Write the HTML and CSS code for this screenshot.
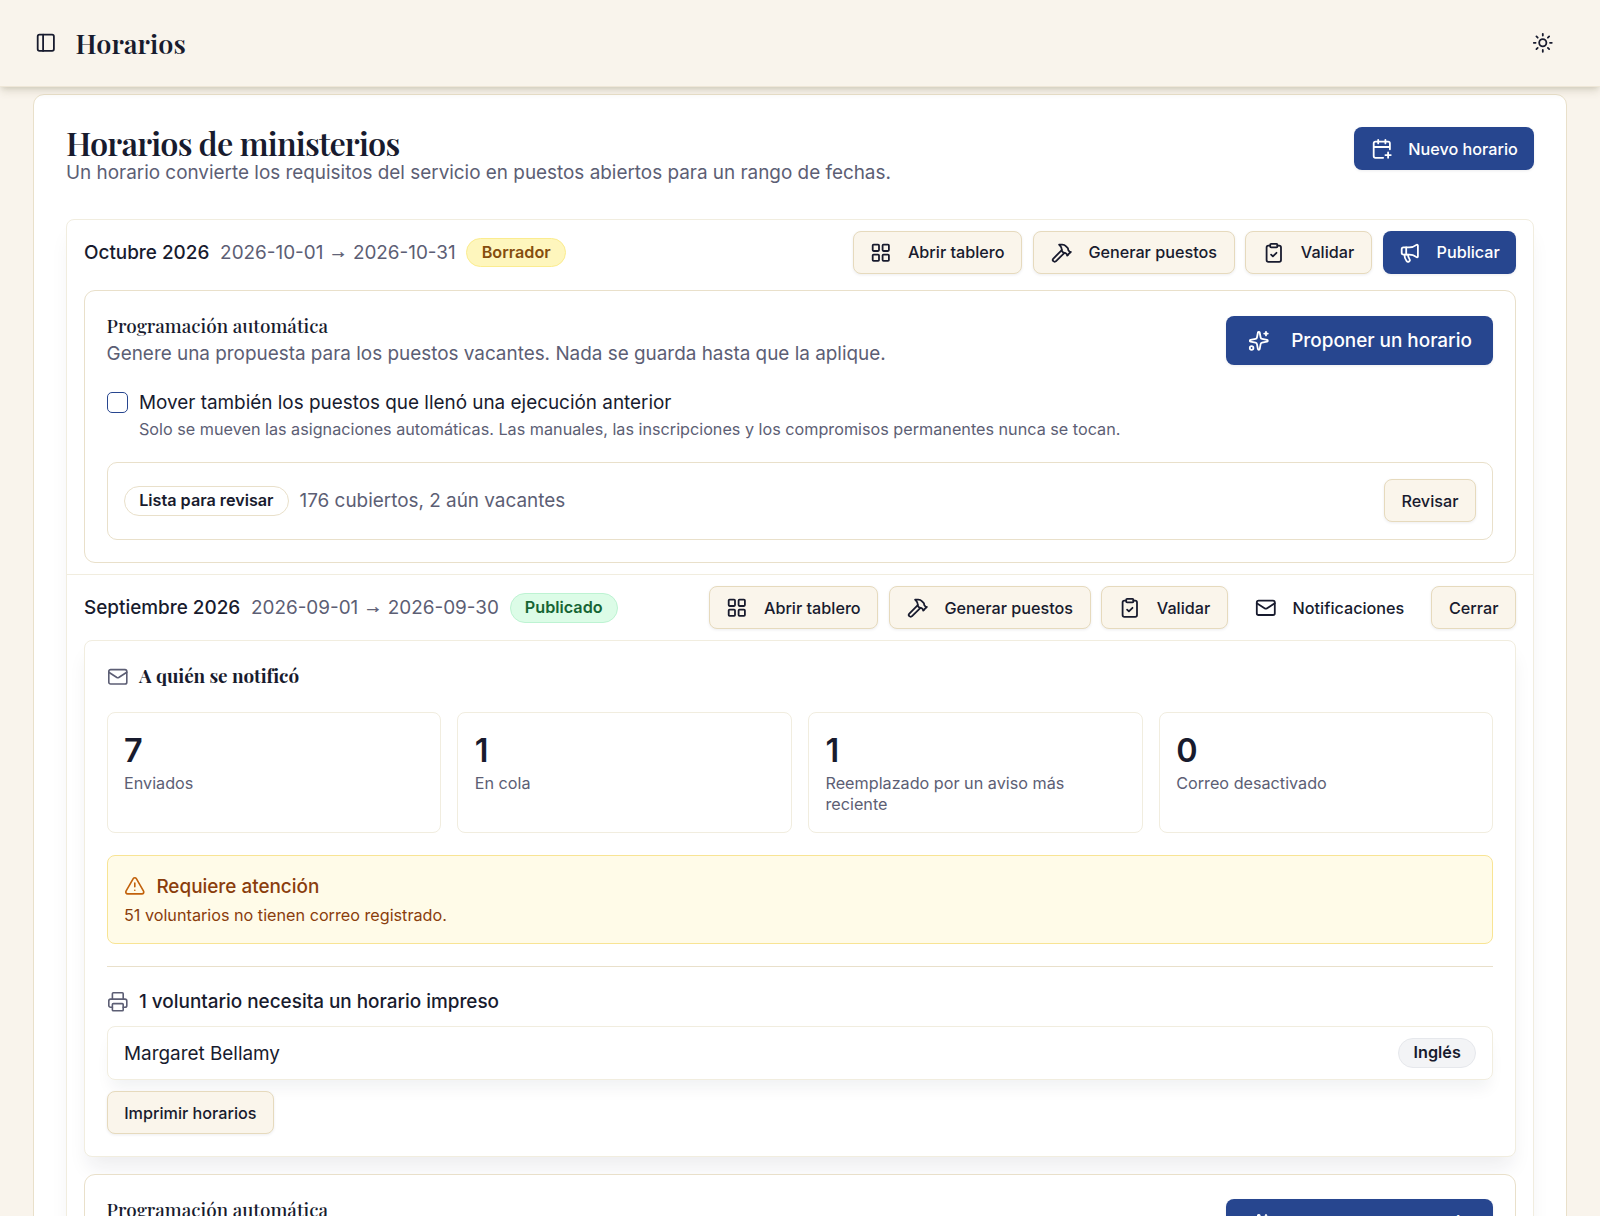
FILE: index.html
```html
<!DOCTYPE html>
<html lang="es">
<head>
    <meta charset="UTF-8">
    <meta name="viewport" content="width=device-width, initial-scale=1.0">
    <title>Horarios</title>
    <link rel="stylesheet" href="styles.css">
</head>
<body>
    <!-- Icon set -->
    <svg class="icon-defs" aria-hidden="true">
        <symbol id="i-panel" viewBox="0 0 24 24"><rect x="3" y="3" width="18" height="18" rx="2"/><path d="M9 3v18"/></symbol>
        <symbol id="i-sun" viewBox="0 0 24 24"><circle cx="12" cy="12" r="4"/><path d="M12 2v2M12 20v2M4.93 4.93l1.41 1.41M17.66 17.66l1.41 1.41M2 12h2M20 12h2M6.34 17.66l-1.41 1.41M19.07 4.93l-1.41 1.41"/></symbol>
        <symbol id="i-calendar" viewBox="0 0 24 24"><path d="M16 19h6M16 2v4M19 16v6M21 12.598V6a2 2 0 0 0-2-2H5a2 2 0 0 0-2 2v14a2 2 0 0 0 2 2h8.5M3 10h18M8 2v4"/></symbol>
        <symbol id="i-grid" viewBox="0 0 24 24"><rect x="3" y="3" width="7" height="7" rx="1"/><rect x="14" y="3" width="7" height="7" rx="1"/><rect x="14" y="14" width="7" height="7" rx="1"/><rect x="3" y="14" width="7" height="7" rx="1"/></symbol>
        <symbol id="i-hammer" viewBox="0 0 24 24"><path d="m15 12-9.373 9.373a1 1 0 0 1-3.001-3L12 9"/><path d="m18 15 4-4"/><path d="m21.5 11.5-1.914-1.914A2 2 0 0 1 19 8.172v-.344a2 2 0 0 0-.586-1.414l-1.657-1.657A6 6 0 0 0 12.516 3H9l1.243 1.243A6 6 0 0 1 12 8.485V10l2 2h1.172a2 2 0 0 1 1.414.586L18.5 14.5"/></symbol>
        <symbol id="i-clipboard" viewBox="0 0 24 24"><rect x="8" y="2" width="8" height="4" rx="1"/><path d="M16 4h2a2 2 0 0 1 2 2v14a2 2 0 0 1-2 2H6a2 2 0 0 1-2-2V6a2 2 0 0 1 2-2h2"/><path d="m9 14 2 2 4-4"/></symbol>
        <symbol id="i-megaphone" viewBox="0 0 24 24"><path d="M11 6a13 13 0 0 0 8.4-2.8A1 1 0 0 1 21 4v12a1 1 0 0 1-1.6.8A13 13 0 0 0 11 14H5a2 2 0 0 1-2-2V8a2 2 0 0 1 2-2z"/><path d="M6 14a12 12 0 0 0 2.4 7.2 2 2 0 0 0 3.2-2.4A8 8 0 0 1 10 14"/><path d="M8 6v8"/></symbol>
        <symbol id="i-sparkles" viewBox="0 0 24 24"><path d="M11.017 2.814a1 1 0 0 1 1.966 0l1.051 5.558a2 2 0 0 0 1.594 1.594l5.558 1.051a1 1 0 0 1 0 1.966l-5.558 1.051a2 2 0 0 0-1.594 1.594l-1.051 5.558a1 1 0 0 1-1.966 0l-1.051-5.558a2 2 0 0 0-1.594-1.594l-5.558-1.051a1 1 0 0 1 0-1.966l5.558-1.051a2 2 0 0 0 1.594-1.594z"/><path d="M20 2v4M22 4h-4"/><circle cx="4" cy="20" r="2"/></symbol>
        <symbol id="i-mail" viewBox="0 0 24 24"><path d="m22 7-8.991 5.727a2 2 0 0 1-2.009 0L2 7"/><rect x="2" y="4" width="20" height="16" rx="2"/></symbol>
        <symbol id="i-alert" viewBox="0 0 24 24"><path d="m21.73 18-8-14a2 2 0 0 0-3.48 0l-8 14A2 2 0 0 0 4 21h16a2 2 0 0 0 1.73-3"/><path d="M12 9v4M12 17h.01"/></symbol>
        <symbol id="i-printer" viewBox="0 0 24 24"><path d="M6 18H4a2 2 0 0 1-2-2v-5a2 2 0 0 1 2-2h16a2 2 0 0 1 2 2v5a2 2 0 0 1-2 2h-2"/><path d="M6 9V3a1 1 0 0 1 1-1h10a1 1 0 0 1 1 1v6"/><rect x="6" y="14" width="12" height="8" rx="1"/></symbol>
    </svg>

    <header class="topbar">
        <svg class="icon"><use href="#i-panel"/></svg>
        <h1 class="topbar-title">Horarios</h1>
        <svg class="icon theme-toggle"><use href="#i-sun"/></svg>
    </header>

    <main class="page-card">
        <div class="page-head">
            <div>
                <h2 class="page-title">Horarios de ministerios</h2>
                <p class="muted">Un horario convierte los requisitos del servicio en puestos abiertos para un rango de fechas.</p>
            </div>
            <button class="btn btn-primary"><svg class="icon"><use href="#i-calendar"/></svg>Nuevo horario</button>
        </div>

        <div class="schedule-list">
            <!-- Octubre -->
            <section class="schedule">
                <div class="schedule-head">
                    <span class="schedule-name">Octubre 2026</span>
                    <span class="schedule-dates">2026-10-01 <span class="arrow">→</span> 2026-10-31</span>
                    <span class="badge badge-draft">Borrador</span>
                    <div class="actions">
                        <button class="btn"><svg class="icon"><use href="#i-grid"/></svg>Abrir tablero</button>
                        <button class="btn"><svg class="icon"><use href="#i-hammer"/></svg>Generar puestos</button>
                        <button class="btn"><svg class="icon"><use href="#i-clipboard"/></svg>Validar</button>
                        <button class="btn btn-primary"><svg class="icon"><use href="#i-megaphone"/></svg>Publicar</button>
                    </div>
                </div>

                <div class="panel">
                    <div class="panel-head">
                        <div>
                            <h3 class="panel-title">Programación automática</h3>
                            <p class="muted">Genere una propuesta para los puestos vacantes. Nada se guarda hasta que la aplique.</p>
                        </div>
                        <button class="btn btn-primary btn-lg"><svg class="icon"><use href="#i-sparkles"/></svg>Proponer un horario</button>
                    </div>
                    <label class="option">
                        <input type="checkbox" class="checkbox">
                        <span>
                            <span class="option-label">Mover también los puestos que llenó una ejecución anterior</span>
                            <span class="option-hint">Solo se mueven las asignaciones automáticas. Las manuales, las inscripciones y los compromisos permanentes nunca se tocan.</span>
                        </span>
                    </label>
                    <div class="proposal">
                        <span class="badge">Lista para revisar</span>
                        <span class="muted">176 cubiertos, 2 aún vacantes</span>
                        <button class="btn proposal-btn">Revisar</button>
                    </div>
                </div>
            </section>

            <!-- Septiembre -->
            <section class="schedule">
                <div class="schedule-head">
                    <span class="schedule-name">Septiembre 2026</span>
                    <span class="schedule-dates">2026-09-01 <span class="arrow">→</span> 2026-09-30</span>
                    <span class="badge badge-published">Publicado</span>
                    <div class="actions">
                        <button class="btn"><svg class="icon"><use href="#i-grid"/></svg>Abrir tablero</button>
                        <button class="btn"><svg class="icon"><use href="#i-hammer"/></svg>Generar puestos</button>
                        <button class="btn"><svg class="icon"><use href="#i-clipboard"/></svg>Validar</button>
                        <button class="btn btn-ghost"><svg class="icon"><use href="#i-mail"/></svg>Notificaciones</button>
                        <button class="btn">Cerrar</button>
                    </div>
                </div>

                <div class="panel panel-notify">
                    <div class="icon-title">
                        <svg class="icon"><use href="#i-mail"/></svg>
                        <h3 class="panel-title panel-title-bold">A quién se notificó</h3>
                    </div>
                    <div class="stats">
                        <div class="stat">
                            <div class="stat-value">7</div>
                            <div class="stat-label">Enviados</div>
                        </div>
                        <div class="stat">
                            <div class="stat-value">1</div>
                            <div class="stat-label">En cola</div>
                        </div>
                        <div class="stat">
                            <div class="stat-value">1</div>
                            <div class="stat-label">Reemplazado por un aviso más reciente</div>
                        </div>
                        <div class="stat">
                            <div class="stat-value">0</div>
                            <div class="stat-label">Correo desactivado</div>
                        </div>
                    </div>
                    <div class="warning">
                        <div class="warning-title"><svg class="icon"><use href="#i-alert"/></svg>Requiere atención</div>
                        <p class="warning-text">51 voluntarios no tienen correo registrado.</p>
                    </div>
                    <div class="print">
                        <div class="icon-title">
                            <svg class="icon"><use href="#i-printer"/></svg>
                            <h4 class="print-title">1 voluntario necesita un horario impreso</h4>
                        </div>
                        <div class="volunteer">
                            <span>Margaret Bellamy</span>
                            <span class="badge badge-lang">Inglés</span>
                        </div>
                        <button class="btn">Imprimir horarios</button>
                    </div>
                </div>

                <div class="panel">
                    <div class="panel-head">
                        <div>
                            <h3 class="panel-title">Programación automática</h3>
                            <p class="muted">Genere una propuesta para los puestos vacantes. Nada se guarda hasta que la aplique.</p>
                        </div>
                        <button class="btn btn-primary btn-lg"><svg class="icon"><use href="#i-sparkles"/></svg>Proponer un horario</button>
                    </div>
                </div>
            </section>
        </div>
    </main>
</body>
</html>
```
FILE: styles.css
```css
:root {
    --bg: #f9f4ec;
    --text: #181b2e;
    --muted: #5c5e74;
    --border: #e9e0ca;
    --border-soft: #f1eddf;
    --primary: #27468f;
    --serif: 'Playfair Display', 'Liberation Serif', serif;
}

* {
    box-sizing: border-box;
    margin: 0;
}

html {
    font-size: 21.6px;
}

body {
    height: 1216px;
    overflow: hidden;
    background: var(--bg);
    color: var(--text);
    font-family: Inter, sans-serif;
    font-size: 18.9px;
    line-height: 27px;
}

.icon-defs {
    display: none;
}

.icon {
    width: 1rem;
    height: 1rem;
    flex-shrink: 0;
    fill: none;
    stroke: currentColor;
    stroke-width: 2;
    stroke-linecap: round;
    stroke-linejoin: round;
}

.muted {
    color: var(--muted);
}

/* Top bar */
.topbar {
    position: relative;
    z-index: 1;
    display: flex;
    align-items: center;
    height: 87px;
    padding: 0 46px 0 35px;
    background: var(--bg);
    border-bottom: 1px solid #efe7d8;
    box-shadow: 0 5px 8px -1px rgba(90, 85, 50, 0.17), 0 2px 5px -2px rgba(90, 85, 50, 0.17);
}

.topbar-title {
    margin-left: 19px;
    font-family: var(--serif);
    font-size: 27px;
    font-weight: 600;
    line-height: 36px;
}

.theme-toggle {
    margin-left: auto;
}

/* Page card */
.page-card {
    height: 1400px;
    margin: 7px 33px 0 33px;
    padding: 32px;
    background: #fff;
    border: 1px solid var(--border);
    border-radius: 11px;
}

.page-head {
    display: flex;
    justify-content: space-between;
    align-items: flex-start;
    margin-bottom: 32.6px;
}

.page-title {
    font-family: var(--serif);
    font-size: 32.4px;
    font-weight: 600;
    letter-spacing: -0.025em;
    line-height: 32.4px;
}

/* Buttons */
.btn {
    display: inline-flex;
    align-items: center;
    gap: 16.2px;
    height: 43.2px;
    padding: 0 16.6px;
    background: #faf5eb;
    border: 1px solid #e6dabd;
    border-radius: 8px;
    box-shadow: 0 1px 3px rgba(24, 27, 46, 0.08);
    color: var(--text);
    font-family: inherit;
    font-size: 16.2px;
    font-weight: 500;
    white-space: nowrap;
}

.btn-primary {
    padding: 0 16.2px;
    background: var(--primary);
    border: 0;
    color: #fff;
}

.btn-ghost {
    padding: 0 16.2px;
    background: none;
    border: 0;
    box-shadow: none;
}

.btn-lg {
    gap: 21.6px;
    height: 48.6px;
    padding: 0 21.6px;
    font-size: 18.9px;
}

/* Badges */
.badge {
    padding: 3px 14.2px;
    border: 1px solid var(--border);
    border-radius: 15px;
    font-size: 16.2px;
    font-weight: 600;
    line-height: 21.6px;
    white-space: nowrap;
}

.badge-draft {
    background: #fef6bd;
    border-color: #fbec8f;
    color: #854d0e;
}

.badge-published {
    background: #dcfce7;
    border-color: #bdf3d2;
    color: #166534;
}

.badge-lang {
    background: #f3f4f6;
    border-color: #e6e8ec;
}

/* Schedules */
.schedule-list {
    border: 1px solid var(--border-soft);
    border-radius: 8px;
    box-shadow: 0 14px 22px -4px rgba(24, 27, 46, 0.06);
}

.schedule {
    display: flex;
    flex-direction: column;
    gap: 16.2px;
    padding: 10.8px 17px 11.4px;
}

.schedule + .schedule {
    border-top: 1px solid var(--border-soft);
}

.schedule + .schedule .schedule-head {
    margin-bottom: -5.4px;
}

.schedule-head {
    display: flex;
    align-items: center;
    gap: 10.8px;
}

.schedule-name {
    font-weight: 500;
}

.schedule-dates {
    color: var(--muted);
}

.arrow {
    font-family: 'Liberation Sans', sans-serif;
    font-size: 18.9px;
    line-height: 0;
    vertical-align: 1.5px;
    -webkit-text-stroke: 0.5px;
}

.actions {
    display: flex;
    gap: 10.8px;
    margin-left: auto;
}

/* Panels */
.panel {
    padding: 22.2px 21.6px;
    background: #fff;
    border: 1px solid var(--border);
    border-radius: 11px;
}

.panel-notify {
    display: flex;
    flex-direction: column;
    gap: 21.6px;
    border-color: var(--border-soft);
    border-radius: 8px;
    box-shadow: 0 14px 20px -4px rgba(24, 27, 46, 0.08);
}

.panel-head {
    display: flex;
    justify-content: space-between;
    align-items: center;
}

.panel-title {
    font-family: var(--serif);
    font-size: 18.9px;
    font-weight: 500;
    line-height: 25px;
    padding-bottom: 2px;
}

.panel-title-bold {
    font-weight: 700;
    letter-spacing: -0.05px;
}

.option {
    display: flex;
    gap: 10.8px;
    margin-top: 21.6px;
}

.option span {
    display: block;
}

.checkbox {
    appearance: none;
    width: 1rem;
    height: 1rem;
    margin-top: 2.7px;
    border: 1px solid var(--primary);
    border-radius: 5px;
}

.option-hint {
    margin-top: 2.7px;
    color: var(--muted);
    font-size: 16.2px;
    line-height: 21.6px;
}

.proposal {
    display: flex;
    align-items: center;
    gap: 10.8px;
    margin-top: 21.6px;
    padding: 16.4px;
    border: 1px solid var(--border);
    border-radius: 10px;
}

.proposal-btn {
    margin-left: auto;
}

.icon-title {
    display: flex;
    align-items: center;
    gap: 10.8px;
}

.icon-title .icon {
    color: var(--muted);
    stroke-width: 1.8;
}

/* Notification stats */
.stats {
    display: grid;
    grid-template-columns: repeat(4, 1fr);
    gap: 16.2px;
}

.stat {
    padding: 16.4px;
    border: 1px solid var(--border-soft);
    border-radius: 8px;
}

.stat-value {
    font-size: 32.4px;
    font-weight: 600;
    line-height: 43.2px;
}

.stat-label {
    color: var(--muted);
    font-size: 16.2px;
    line-height: 21.6px;
}

.warning {
    padding: 16.8px 16.4px;
    background: #fffbe8;
    border: 1px solid #f8e494;
    border-radius: 8px;
    color: #8a3d0c;
}

.warning-title {
    display: flex;
    align-items: center;
    gap: 10.8px;
    font-weight: 500;
}

.warning-title .icon {
    color: #c2620c;
    stroke-width: 1.8;
}

.warning-text {
    margin-top: 5.4px;
    font-size: 16.2px;
    line-height: 21.6px;
}

.print {
    display: flex;
    flex-direction: column;
    align-items: flex-start;
    gap: 10.8px;
    padding-top: 21.6px;
    border-top: 1px solid var(--border);
}

.print-title {
    font-size: inherit;
    font-weight: 500;
}

.volunteer {
    display: flex;
    justify-content: space-between;
    align-items: center;
    width: 100%;
    padding: 11.2px 16.4px;
    border: 1px solid var(--border-soft);
    border-radius: 8px;
    box-shadow: 0 12px 16px -4px rgba(24, 27, 46, 0.06);
}
```
